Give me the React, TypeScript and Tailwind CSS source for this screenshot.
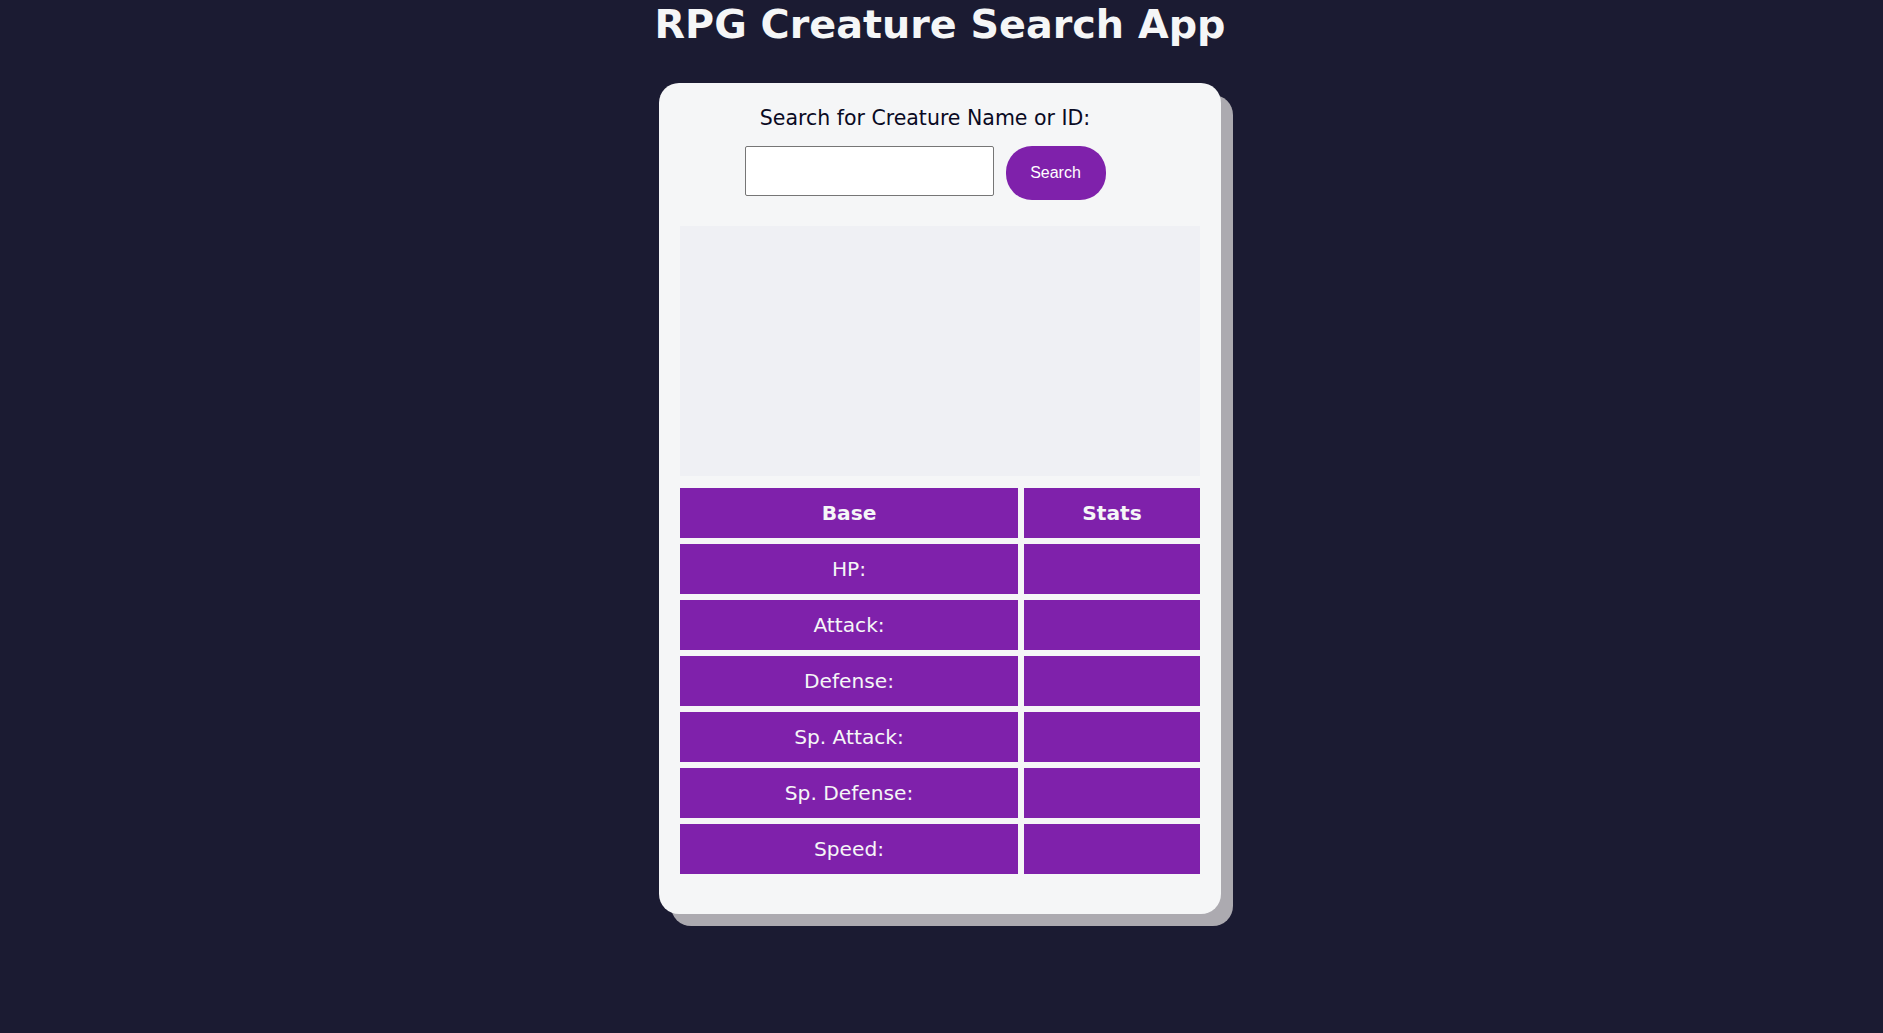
import React from "react";

const rows = ["HP:", "Attack:", "Defense:", "Sp. Attack:", "Sp. Defense:", "Speed:"];

export default function App() {
  return (
    <div
      className="min-h-screen w-full bg-[#1b1b32] flex flex-col items-center pr-[3px]"
      style={{ fontFamily: '"DejaVu Sans", Verdana, sans-serif' }}
    >
      <h1 className="m-0 text-[39.7px] leading-[48px] font-bold text-[#f5f6f7]">RPG Creature Search App</h1>
      <div className="mt-[35px] w-[562px] rounded-[20px] bg-[#f5f6f7] shadow-[12px_12px_0_#acaab0] px-[21px] pt-[23px] pb-[40px] flex flex-col">
        <div className="flex flex-col items-center pr-[30px]">
          <label htmlFor="search-input" className="text-[20.5px] leading-[24px] text-[#0a0a23]">
            Search for Creature Name or ID:
          </label>
          <div className="mt-[16px] flex items-start gap-[12px]">
            <input
              id="search-input"
              type="text"
              className="w-[249px] h-[50px] bg-white border border-[#767676] rounded-[2px] outline-none"
            />
            <button
              className="w-[100px] h-[54px] rounded-[26px] bg-[#7f21ab] text-white text-[16px]"
              style={{ fontFamily: '"Liberation Sans", Arial, sans-serif' }}
            >
              Search
            </button>
          </div>
        </div>
        <div className="mt-[26px] w-[520px] h-[250px] bg-[#eff0f4]" />
        <div className="mt-[12px] grid grid-cols-[338px_176px] gap-[6px] text-[20.2px] text-[#f5f6f7]">
          <div className="h-[50px] bg-[#7f21ab] flex items-center justify-center font-bold">Base</div>
          <div className="h-[50px] bg-[#7f21ab] flex items-center justify-center font-bold">Stats</div>
          {rows.map((r) => (
            <React.Fragment key={r}>
              <div className="h-[50px] bg-[#7f21ab] flex items-center justify-center">{r}</div>
              <div className="h-[50px] bg-[#7f21ab]" />
            </React.Fragment>
          ))}
        </div>
      </div>
    </div>
  );
}
